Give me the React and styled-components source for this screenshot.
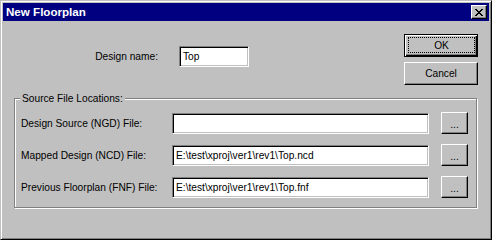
import React from 'react';
import styled, { createGlobalStyle, css } from 'styled-components';

const Global = createGlobalStyle`
  body {
    margin: 0;
    background: #c0c0c0;
    font-family: "Liberation Sans", Arial, sans-serif;
  }
`;

const Window = styled.div`
  width: 492px;
  height: 240px;
  box-sizing: border-box;
  background: #c0c0c0;
  border: 1px solid;
  border-color: #c0c0c0 #000 #000 #c0c0c0;
  box-shadow: inset 1px 1px #fff, inset -1px -1px #808080;
  padding: 2px;
  display: flex;
  flex-direction: column;
`;

const TitleBar = styled.div`
  height: 18px;
  flex: none;
  background: #000080;
  display: flex;
  align-items: center;
  padding: 0 2px 0 3px;
`;

const Title = styled.span`
  color: #fff;
  font-weight: bold;
  font-size: 11.6px;
  line-height: 18px;
`;

const CloseBtn = styled.div`
  margin-left: auto;
  width: 16px;
  height: 14px;
  box-sizing: border-box;
  background: #c0c0c0;
  border: 1px solid;
  border-color: #fff #000 #000 #fff;
  box-shadow: inset -1px -1px #808080;
  display: flex;
  align-items: center;
  justify-content: center;
  padding-right: 1px;
`;

const Client = styled.div`
  flex: 1;
  display: flex;
  flex-direction: column;
  padding: 0 11px 0 11px;
  font-size: 10.2px;
  color: #000;
`;

const Top = styled.div`
  height: 77px;
  box-sizing: border-box;
  padding-top: 13px;
  display: flex;
  align-items: flex-start;
`;

const NameRow = styled.div`
  display: flex;
  align-items: center;
  gap: 21px;
  margin-top: 12px;
`;

const Label = styled.span`
  width: ${p => p.$w}px;
  text-align: ${p => (p.$right ? 'right' : 'left')};
  white-space: nowrap;
  flex: none;
`;

const Field = styled.div`
  width: ${p => p.$w}px;
  height: 21px;
  box-sizing: border-box;
  background: #fff;
  border: 1px solid;
  border-color: #808080 #fff #fff #808080;
  box-shadow: inset 1px 1px #000, inset -1px -1px #c0c0c0;
  padding: 0 3px;
  display: flex;
  align-items: center;
  white-space: nowrap;
  overflow: hidden;
  flex: none;
`;

const ButtonCol = styled.div`
  margin-left: auto;
  display: flex;
  flex-direction: column;
  gap: 5px;
`;

const Button = styled.button`
  width: ${p => p.$w}px;
  height: ${p => p.$h}px;
  box-sizing: border-box;
  background: #c0c0c0;
  border: 1px solid;
  border-color: #fff #000 #000 #fff;
  box-shadow: inset -1px -1px #808080;
  font: 10.2px "Liberation Sans", Arial, sans-serif;
  color: #000;
  padding: 0;
  display: flex;
  align-items: center;
  justify-content: center;
  flex: none;
  ${p =>
    p.$default &&
    css`
      border-color: #000;
      box-shadow: inset 1px 1px #fff, inset -1px -1px #000, inset -2px -2px #808080;
      padding: 2px 2px 3px 3px;
    `}
`;

const Focus = styled.span`
  flex: 1;
  align-self: stretch;
  border: 1px dotted #000;
  display: flex;
  align-items: center;
  justify-content: center;
`;

const Group = styled.div`
  position: relative;
  height: 110px;
  box-sizing: border-box;
  margin-right: 1px;
  border: 1px solid #808080;
  box-shadow: inset 1px 1px #fff, 1px 1px #fff;
  padding: 13px 0 0 6px;
  display: flex;
  flex-direction: column;
  gap: 10px;
`;

const Legend = styled.span`
  position: absolute;
  top: -7px;
  left: 5px;
  padding: 0 2px;
  line-height: 13px;
  background: #c0c0c0;
`;

const Row = styled.div`
  display: flex;
  align-items: center;
  height: 22px;
`;

const Browse = styled(Button)`
  margin-left: 12px;
  padding-top: 2px;
`;

const CloseGlyph = () => (
  <svg width="8" height="7" viewBox="0 0 8 7" shapeRendering="crispEdges">
    <path
      fill="#000"
      d="M0 0h2v1H0zM6 0h2v1H6zM1 1h2v1H1zM5 1h2v1H5zM2 2h4v1H2zM3 3h2v1H3zM2 4h4v1H2zM1 5h2v1H1zM5 5h2v1H5zM0 6h2v1H0zM6 6h2v1H6z"
    />
  </svg>
);

const files = [
  { label: 'Design Source (NGD) File:', value: '' },
  { label: 'Mapped Design (NCD) File:', value: 'E:\\test\\xproj\\ver1\\rev1\\Top.ncd' },
  { label: 'Previous Floorplan (FNF) File:', value: 'E:\\test\\xproj\\ver1\\rev1\\Top.fnf' },
];

export default function App() {
  return (
    <>
      <Global />
      <Window>
        <TitleBar>
          <Title>New Floorplan</Title>
          <CloseBtn>
            <CloseGlyph />
          </CloseBtn>
        </TitleBar>
        <Client>
          <Top>
            <NameRow>
              <Label $w={144} $right>Design name:</Label>
              <Field $w={70}>Top</Field>
            </NameRow>
            <ButtonCol>
              <Button $w={74} $h={23} $default>
                <Focus>OK</Focus>
              </Button>
              <Button $w={74} $h={23}>Cancel</Button>
            </ButtonCol>
          </Top>
          <Group>
            <Legend>Source File Locations:</Legend>
            {files.map(f => (
              <Row key={f.label}>
                <Label $w={151}>{f.label}</Label>
                <Field $w={257}>{f.value}</Field>
                <Browse $w={27} $h={22}>...</Browse>
              </Row>
            ))}
          </Group>
        </Client>
      </Window>
    </>
  );
}
